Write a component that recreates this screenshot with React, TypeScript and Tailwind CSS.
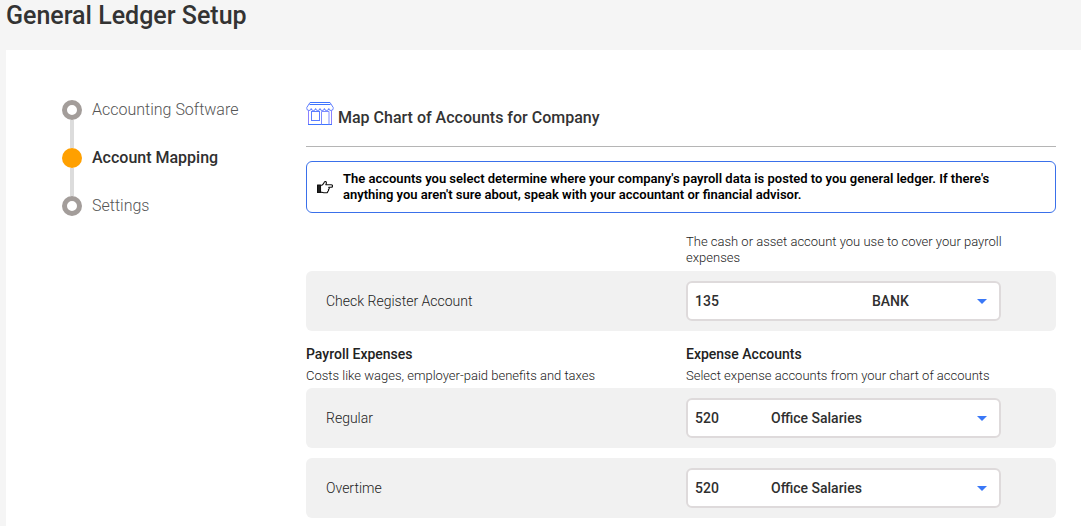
import { useState } from 'react';

const NBSP = '\u00a0';

type Account = { code: string; name: string; gap: number };

const steps = [
  { label: 'Accounting Software', current: false },
  { label: 'Account Mapping', current: true },
  { label: 'Settings', current: false },
];

const bank: Account = { code: '135', name: 'BANK', gap: 44 };
const salaries: Account = { code: '520', name: 'Office Salaries', gap: 15 };

function StoreIcon() {
  return (
    <svg className="h-6 w-7 shrink-0" viewBox="0 0 28 24" fill="none" stroke="#3d74ff" aria-hidden="true">
      <path d="M4 .5h20M3.500 2.500h21" />
      <path d="M4 .5 .8 5.500v1a2.2 2 0 0 0 4.4 0 2.2 2 0 0 0 4.4 0 2.2 2 0 0 0 4.4 0 2.2 2 0 0 0 4.4 0 2.2 2 0 0 0 4.4 0 2.2 2 0 0 0 4.4 0V5.500L24 .5" stroke="#5f7dff" />
      <path d="M2.500 8.500v14M25.500 8.500v14" stroke="#8a80ff" />
      <path d="M2 22.500h24" />
      <rect x="5.500" y="9.500" width="8" height="9" stroke="#5b7dff" />
      <path d="M15.500 22.500v-13h7.500v13" stroke="#7d8bff" />
    </svg>
  );
}

function PointingHandIcon() {
  return (
    <svg className="h-4 w-4 shrink-0" viewBox="0 0 16 16" fill="none" stroke="#111" strokeWidth="1.1" strokeLinejoin="round" aria-hidden="true">
      <path d="M.5 6h3v7.5h-3z" fill="#222" />
      <path d="M3.500 6.200h1.300C6.200 5.800 6.600 4.300 7.400 3c.5-.8 2-.5 2 .8 0 .8-.3 1.300-.6 1.900h5.300c1.900 0 1.900 2.600 0 2.600h-2.400c.9.700.6 1.900-.3 2.200.4.800.1 1.600-.7 1.900.1 1-.5 1.400-1.400 1.400H7.600c-1.400 0-2.200-.7-4.100-.7" />
    </svg>
  );
}

function StepNav() {
  return (
    <nav aria-label="Setup steps" className="w-[250px] shrink-0">
      <ol>
        {steps.map((step, i) => (
          <li key={step.label} className="flex gap-2.5">
            <div className="flex w-5 flex-col items-center">
              <span
                className={
                  step.current
                    ? 'size-5 rounded-full bg-[#ffa000]'
                    : 'size-5 rounded-full border-5 border-[#a39d9a] bg-white'
                }
              />
              {i < steps.length - 1 && <span className="h-7 w-1 bg-[#dcdcdc]" />}
            </div>
            <a
              href="#"
              aria-current={step.current ? 'step' : undefined}
              className={
                step.current
                  ? 'h-5 text-base leading-5 font-medium text-[#2f2f2f]'
                  : 'h-5 text-base leading-5 font-light text-[#555]'
              }
            >
              {step.label}
            </a>
          </li>
        ))}
      </ol>
    </nav>
  );
}

function AccountRow({ id, label, account }: { id: string; label: string; account: Account }) {
  const [value, setValue] = useState(account.code);
  return (
    <div className="grid grid-cols-[380fr_370fr] items-center rounded-md bg-[#f1f1f1] py-2.5">
      <label htmlFor={id} className="pl-5 text-sm leading-5 font-light text-[#222]">
        {label}
      </label>
      <div className="relative mr-[55px]">
        <select
          id={id}
          value={value}
          onChange={(e) => setValue(e.target.value)}
          className="h-10 w-full appearance-none rounded-md border-2 border-[#dedadb] bg-white pl-[7px] text-sm font-medium text-[#2f2f2f]"
        >
          <option value={account.code}>{account.code + NBSP.repeat(account.gap) + account.name}</option>
        </select>
        <svg className="pointer-events-none absolute top-[18px] right-3.5 h-[5px] w-2.5" viewBox="0 0 10 5" aria-hidden="true">
          <path d="M0 0h10L5 5z" fill="#3a78f7" />
        </svg>
      </div>
    </div>
  );
}

export default function App() {
  return (
    <div className="flex min-h-screen flex-col bg-[#f5f5f5] pl-1.5 font-[Roboto,sans-serif]">
      <h1 className="h-[50px] text-[25px] leading-8 font-medium text-[#333]">General Ledger Setup</h1>
      <main className="flex flex-1 bg-white pt-[50px] pr-[25px] pb-2 pl-14">
        <StepNav />
        <section className="-ml-1.5 min-w-0 flex-1">
          <header className="flex gap-1 border-b border-[#b5b5b5] pt-0.5 pb-[18px]">
            <StoreIcon />
            <h2 className="pt-1.5 text-base leading-5 font-medium text-[#333]">Map Chart of Accounts for Company</h2>
          </header>
          <div className="mt-3.5 flex items-center gap-2.5 rounded-md border border-[#3a70ea] px-2.5 py-[9px]">
            <PointingHandIcon />
            <p className="max-w-[670px] text-[13px] leading-4 font-semibold text-black">
              The accounts you select determine where your company's payroll data is posted to you general ledger. If there's
              anything you aren't sure about, speak with your accountant or financial advisor.
            </p>
          </div>
          <div className="mt-[21px] mb-[5px] grid grid-cols-[380fr_370fr] text-[13px] leading-4 font-light text-[#222]">
            <p className="col-start-2 mr-10">The cash or asset account you use to cover your payroll expenses</p>
          </div>
          <AccountRow id="check-register" label="Check Register Account" account={bank} />
          <div className="mt-[13px] mb-1 grid grid-cols-[380fr_370fr] text-[13px] leading-4 font-light text-[#222]">
            <div>
              <h3 className="mb-1 text-sm leading-5 font-medium">Payroll Expenses</h3>
              <p>Costs like wages, employer-paid benefits and taxes</p>
            </div>
            <div>
              <h3 className="mb-1 text-sm leading-5 font-medium">Expense Accounts</h3>
              <p>Select expense accounts from your chart of accounts</p>
            </div>
          </div>
          <div className="flex flex-col gap-2.5">
            <AccountRow id="regular" label="Regular" account={salaries} />
            <AccountRow id="overtime" label="Overtime" account={salaries} />
          </div>
        </section>
      </main>
    </div>
  );
}
